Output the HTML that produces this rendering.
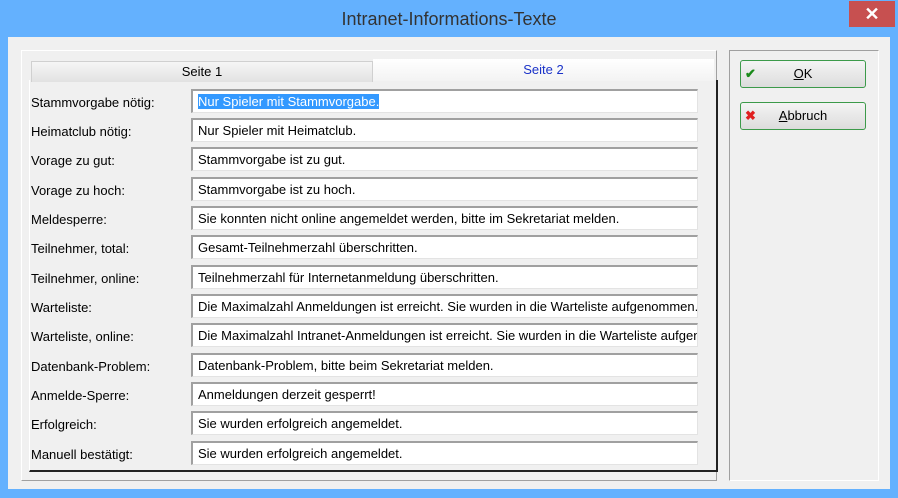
<!DOCTYPE html><html><head><style>
body{margin:0;width:898px;height:498px;background:#64b1fe;position:relative;overflow:hidden;font-family:"Liberation Sans",sans-serif;font-size:13px;color:#000}
.abs{position:absolute}
.title{left:0;top:0;width:898px;height:37px;text-align:center;line-height:38px;font-size:18px;color:#333}
.close{left:849px;top:1px;width:46px;height:26px;background:#c75050;color:#fff;text-align:center;line-height:26px;font-size:18px;font-weight:bold}
.client{left:8px;top:37px;width:882px;height:452px;background:#f0f0f0}
.field{position:absolute;left:191px;width:507px;background:#fff;border-top:2px solid #a0a0a0;border-left:2px solid #a0a0a0;border-bottom:1px solid #e3e3e3;border-right:1px solid #e3e3e3;line-height:22px;padding-left:5px;box-sizing:border-box;height:24px;white-space:nowrap;overflow:hidden}
.lbl{position:absolute;left:31px;line-height:24px;margin-top:2px}
.btn{position:absolute;left:740px;width:126px;height:28px;box-sizing:border-box;border:1px solid #3c9a4a;border-radius:3px;background:linear-gradient(#f4f4f4,#dcdcdc);text-align:center;line-height:26px}
</style></head><body>
<div class="abs title">Intranet-Informations-Texte</div>
<div class="abs close">✕</div>
<div class="abs client"></div>
<div class="abs" style="left:21px;top:50px;width:694px;height:429px;border:1px solid #fff;border-right-color:#a0a0a0;border-bottom-color:#a0a0a0"></div>
<div class="abs" style="left:29px;top:80px;width:686px;height:390px;background:#f0f0f0;border-left:1px solid #fff;border-right:2px solid #222;border-bottom:2px solid #222"></div>
<div class="abs" style="left:31px;top:61px;width:340px;height:20px;background:linear-gradient(#f6f6f6,#e2e2e2);border:1px solid #d0d0d0;border-bottom:none;text-align:center;line-height:20px">Seite 1</div>
<div class="abs" style="left:373px;top:59px;width:341px;height:22px;background:linear-gradient(#fff,#f3f3f3);text-align:center;line-height:22px;color:#1a32c8">Seite 2</div>
<div class="abs" style="left:729px;top:50px;width:148px;height:429px;border:1px solid #a0a0a0;border-right-color:#fff;border-bottom-color:#fff"></div>
<div class="btn" style="top:60px"><span style="position:absolute;left:4px;top:0;color:#1a8a1a;font-weight:bold">✔</span><u>O</u>K</div>
<div class="btn" style="top:102px"><span style="position:absolute;left:4px;top:0;color:#e02020;font-weight:bold">✖</span><u>A</u>bbruch</div>
<div class="lbl" style="top:89px">Stammvorgabe nötig:</div><div class="field" style="top:89px"><span style="background:#3399ff;color:#fff">Nur Spieler mit Stammvorgabe.</span></div>
<div class="lbl" style="top:118px">Heimatclub nötig:</div><div class="field" style="top:118px">Nur Spieler mit Heimatclub.</div>
<div class="lbl" style="top:147px">Vorage zu gut:</div><div class="field" style="top:147px">Stammvorgabe ist zu gut.</div>
<div class="lbl" style="top:177px">Vorage zu hoch:</div><div class="field" style="top:177px">Stammvorgabe ist zu hoch.</div>
<div class="lbl" style="top:206px">Meldesperre:</div><div class="field" style="top:206px">Sie konnten nicht online angemeldet werden, bitte im Sekretariat melden.</div>
<div class="lbl" style="top:235px">Teilnehmer, total:</div><div class="field" style="top:235px">Gesamt-Teilnehmerzahl überschritten.</div>
<div class="lbl" style="top:265px">Teilnehmer, online:</div><div class="field" style="top:265px">Teilnehmerzahl für Internetanmeldung überschritten.</div>
<div class="lbl" style="top:294px">Warteliste:</div><div class="field" style="top:294px">Die Maximalzahl Anmeldungen ist erreicht. Sie wurden in die Warteliste aufgenommen.</div>
<div class="lbl" style="top:323px">Warteliste, online:</div><div class="field" style="top:323px">Die Maximalzahl Intranet-Anmeldungen ist erreicht. Sie wurden in die Warteliste aufgenommen.</div>
<div class="lbl" style="top:353px">Datenbank-Problem:</div><div class="field" style="top:353px">Datenbank-Problem, bitte beim Sekretariat melden.</div>
<div class="lbl" style="top:382px">Anmelde-Sperre:</div><div class="field" style="top:382px">Anmeldungen derzeit gesperrt!</div>
<div class="lbl" style="top:411px">Erfolgreich:</div><div class="field" style="top:411px">Sie wurden erfolgreich angemeldet.</div>
<div class="lbl" style="top:441px">Manuell bestätigt:</div><div class="field" style="top:441px">Sie wurden erfolgreich angemeldet.</div>
</body></html>
